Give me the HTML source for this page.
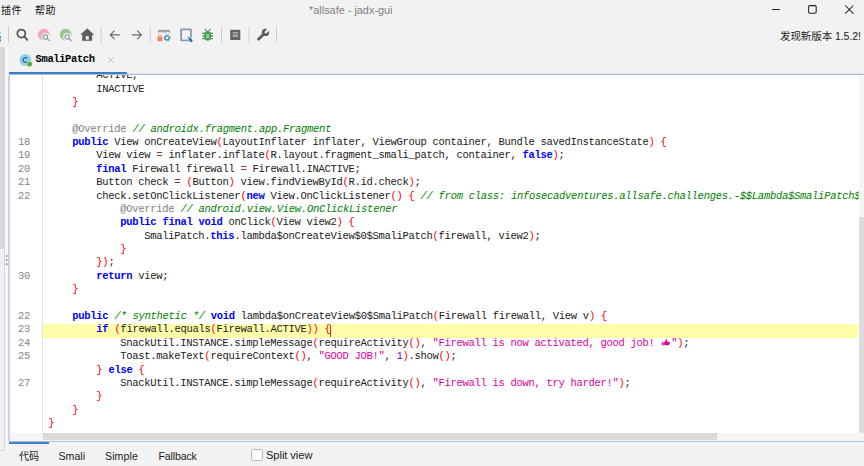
<!DOCTYPE html>
<html lang="zh-CN">
<head>
<meta charset="utf-8">
<title>*allsafe - jadx-gui</title>
<style>
html,body{margin:0;padding:0}
body{width:864px;height:466px;overflow:hidden;background:#f2f2f2;position:relative;font-family:"Liberation Sans","Noto Sans CJK SC",sans-serif;color:#1a1a1a}
.abs{position:absolute}
.ui{position:absolute;white-space:nowrap;font-size:11px;line-height:14px;color:#222}
.sep{position:absolute;top:27px;height:16px;width:1px;background:#cfcfcf}
#code{position:absolute;left:9px;top:75px;width:849.8px;height:366px;background:#fff;overflow:hidden}
#codeclip{position:absolute;left:0;top:0;width:864px;height:466px;clip-path:inset(75px 5.3px 33px 0)}
.ln{position:absolute;white-space:pre;font-family:"Liberation Mono",monospace;font-size:10.5px;letter-spacing:-0.3px;line-height:13.33px;height:13.33px;color:#202020}
.no{position:absolute;left:9px;width:21.1px;text-align:right;white-space:pre;font-family:"Liberation Mono",monospace;font-size:10.5px;letter-spacing:-0.3px;line-height:13.33px;height:13.33px;color:#8a8580}
.k{color:#0000ff;font-weight:bold}
.c{color:#008000;font-style:italic;letter-spacing:-0.277px}
.s{color:#dc009c}
.p{color:#ff0000}
.a{color:#808080}
.n{color:#6400c8}
.o{color:#804040}
.em{display:inline-block;width:10.8px;height:8px;position:relative;vertical-align:baseline;letter-spacing:0}
.em svg{position:absolute;left:0.6px;top:1px}
.em i{font-size:0;font-style:normal}
</style>
</head>
<body>
<!-- title bar / menu -->
<div class="ui" style="left:1px;top:3.5px;font-size:10px;letter-spacing:0.4px;color:#111">插件</div>
<div class="ui" style="left:35px;top:3.5px;font-size:10px;letter-spacing:0.4px;color:#111">帮助</div>
<div class="ui" id="title" style="left:309px;top:2.6px;font-size:10.9px;color:#808080">*allsafe - jadx-gui</div>
<svg class="abs" style="left:760px;top:0" width="104" height="20" viewBox="0 0 104 20" fill="none" stroke="#222" stroke-width="1.05">
<path d="M11.8 9.5h8"/>
<rect x="48.6" y="5.6" width="7.6" height="7.6" rx="1.3"/>
<path d="M85.2 5.5l8.2 8.2M93.4 5.5l-8.2 8.2"/>
</svg>
<div class="ui" id="newver" style="left:780px;top:29px;font-size:10.5px;color:#222;letter-spacing:-0.08px">发现新版本 1.5.2!</div>

<!-- toolbar -->
<svg class="abs" style="left:0;top:20px" width="290" height="28" viewBox="0 20 290 28">
<!-- clipped icon at left -->
<rect x="-1" y="31.8" width="2.1" height="1.7" fill="#b4c0cb"/><g fill="#1ea0dc"><rect x="-1" y="36" width="2.1" height="2.2"/><rect x="-1" y="39.2" width="2.1" height="2.2"/></g>
<!-- separators -->
<g fill="#cdcdcd">
<rect x="8" y="26.6" width="1" height="16.2"/>
<rect x="100.6" y="26.6" width="1" height="16.2"/>
<rect x="149.8" y="26.6" width="1" height="16.2"/>
<rect x="221" y="26.6" width="1" height="16.2"/>
<rect x="248.5" y="26.6" width="1" height="16.2"/>
<rect x="276" y="26.6" width="1" height="16.2"/>
</g>
<!-- search -->
<g fill="none" stroke="#555555" stroke-width="1.75" stroke-linecap="round"><circle cx="21.3" cy="33.5" r="4"/><path d="M24.4 36.7l2.9 3.1"/></g>
<!-- pink search -->
<circle cx="43.8" cy="34.7" r="5.9" fill="#f4a8b9"/>
<circle cx="45.4" cy="37" r="4" fill="#f2f2f2"/>
<g fill="none" stroke="#8293a3" stroke-width="1.05" stroke-linecap="round"><circle cx="45.3" cy="36.9" r="2.25"/><path d="M47.1 38.7l2.5 2"/></g>
<!-- green search -->
<circle cx="65.6" cy="34.7" r="5.9" fill="#93cc8a"/>
<circle cx="67.2" cy="37" r="4" fill="#f2f2f2"/>
<g fill="none" stroke="#8293a3" stroke-width="1.05" stroke-linecap="round"><circle cx="67.1" cy="36.9" r="2.25"/><path d="M68.9 38.7l2.5 2"/></g>
<!-- home -->
<path fill="#5c5c5c" stroke="#5c5c5c" stroke-width="0.6" stroke-linejoin="round" d="M87.2 28.7l6.4 5.9h-1.7v6h-9.4v-6h-1.7z"/>
<rect x="85.7" y="36.2" width="3.1" height="3.4" fill="#f2f2f2"/>
<!-- arrows -->
<g fill="none" stroke="#6a6a6a" stroke-width="1.2" stroke-linecap="round" stroke-linejoin="round">
<path d="M119.4 34.8h-9.2M114.2 30.8l-4 4 4 4"/>
<path d="M132.2 34.8h9.2M137.4 30.8l4 4-4 4"/>
</g>
<!-- deobf -->
<g>
<rect x="158.1" y="29.9" width="11.9" height="1.9" fill="#8e9ba8"/>
<rect x="158.1" y="31.5" width="0.9" height="1.9" fill="#98a4b0"/><rect x="169.1" y="31.5" width="0.9" height="1.9" fill="#98a4b0"/>
<rect x="160.5" y="32.2" width="6.5" height="0.8" fill="#c5ccd3"/>
<rect x="157.5" y="36.7" width="4.9" height="4.5" rx="0.5" fill="#f0875a"/>
<path d="M158.7 37v-0.9a1.25 1.25 0 0 1 2.5 0v0.9" fill="none" stroke="#f0875a" stroke-width="0.9"/>
<circle cx="167.1" cy="37.9" r="2.05" fill="none" stroke="#4a90bd" stroke-width="1.4"/>
<circle cx="167.1" cy="37.9" r="3.1" fill="none" stroke="#4a90bd" stroke-width="1" stroke-dasharray="1.22 1.215"/>
</g>
<!-- select rect + cursor -->
<rect x="181.1" y="29.3" width="9.8" height="11.1" rx="0.4" fill="none" stroke="#8999a9" stroke-width="1.8"/>
<path d="M187.5 36.3L192.3 39.4A1.6 1.6 0 1 1 189.6 41.3Z" fill="#1674a8" stroke="#f2f2f2" stroke-width="1.3" stroke-linejoin="round" paint-order="stroke"/>
<!-- bug -->
<g fill="#4c9c56">
<ellipse cx="207.7" cy="36" rx="3.5" ry="4.8"/>
<rect x="202.4" y="32.5" width="10.6" height="1.5" rx="0.5"/><rect x="202.4" y="35.1" width="10.6" height="1.5" rx="0.5"/><rect x="202.4" y="37.8" width="10.6" height="1.5" rx="0.5"/>
</g>
<path d="M205.2 29.3l2.3 2.8M210.2 29.3l-2.3 2.8" stroke="#4c9c56" stroke-width="1.25" stroke-linecap="round" fill="none"/>
<rect x="206.2" y="34.5" width="3" height="1.1" fill="#e9f1ea"/><rect x="206.2" y="36.8" width="3" height="1.1" fill="#e9f1ea"/>
<!-- log -->
<rect x="230.2" y="29.8" width="10.1" height="10.2" fill="#636363"/>
<g fill="#bdbdbd"><rect x="232.7" y="32.2" width="5.4" height="0.8"/><rect x="232.7" y="33.55" width="5.4" height="0.8"/><rect x="232.7" y="34.9" width="5.4" height="0.8"/><rect x="232.7" y="36.25" width="5.4" height="0.8"/></g>
<!-- wrench -->
<g>
<path d="M258.5 39.2l5.8-5.7" stroke="#5c5c5c" stroke-width="2.7" stroke-linecap="round" fill="none"/>
<circle cx="265.5" cy="32.4" r="3.65" fill="#5c5c5c"/>
<path d="M265.9 32.1l3.6-3.6" stroke="#f2f2f2" stroke-width="2.5" stroke-linecap="round" fill="none"/>
</g>
</svg>

<!-- left collapsed panel scrollbar -->
<div class="abs" style="left:0;top:47px;width:4.5px;height:403.5px;background:#f0f0f0;border-right:1px solid #d6d6d6;border-bottom:1px solid #d6d6d6;box-sizing:border-box"></div>
<div class="abs" style="left:0;top:47px;width:4.2px;height:201.6px;background:#d9d9d9"></div>
<!-- divider grip -->
<div class="abs" style="left:4.9px;top:47px;width:3.2px;height:403px;background:#f7f7f7"></div>
<svg class="abs" style="left:4px;top:252px" width="6" height="16" viewBox="4 252 6 16"><g fill="#939393"><circle cx="6.6" cy="256" r="1"/><circle cx="6.6" cy="260.1" r="1"/><circle cx="6.6" cy="264.2" r="1"/></g></svg>

<!-- tab -->
<svg class="abs" style="left:17px;top:50px" width="20" height="20" viewBox="17 50 20 20">
<circle cx="25.35" cy="60" r="5.95" fill="#86d2f4"/>
<path d="M27.3 58.5a2.35 2.35 0 1 0 0 2.9" fill="none" stroke="#476273" stroke-width="1.3"/>
<circle cx="29.5" cy="64.1" r="3.1" fill="#f2f2f2"/>
<circle cx="29.5" cy="64.1" r="2.5" fill="#4fb035"/>
</svg>
<div class="abs" id="tabname" style="left:35.6px;top:52px;font-family:'Liberation Mono',monospace;font-weight:bold;font-size:10.5px;letter-spacing:-0.4px;line-height:14px;color:#000;white-space:pre">SmaliPatch</div>
<svg class="abs" style="left:106px;top:55px" width="10" height="10" viewBox="0 0 10 10"><path d="M2 2.2l5.8 5.8M7.8 2.2l-5.8 5.8" stroke="#b9bfc5" stroke-width="0.95" fill="none"/></svg>
<div class="abs" style="left:9px;top:72.7px;width:855px;height:1px;background:#e0e4e8"></div>
<div class="abs" style="left:9px;top:73.6px;width:855px;height:1.4px;background:#a9bfd5"></div>
<div class="abs" style="left:9px;top:71.5px;width:118px;height:2.8px;background:#3c7fc6"></div>

<!-- code area -->
<div id="code">
  <div class="abs" style="left:32.8px;top:0;width:1.1px;height:358px;background:#e2e2e2"></div>
  <!-- current line highlight -->
  <div class="abs" style="left:33.9px;top:249px;width:815.1px;height:13.5px;background:#ffffaa"></div>
  <!-- h scrollbar -->
  <div class="abs" style="left:1px;top:358px;width:849px;height:8px;background:#f5f5f5"></div>
  <div class="abs" style="left:34px;top:357.9px;width:674px;height:7.4px;background:#dadada"></div>
  <!-- v scrollbar -->
</div>
<div class="abs" style="left:858.5px;top:75px;width:5.5px;height:366px;background:#f5f5f5"></div>
<div class="abs" style="left:858.8px;top:217px;width:5.2px;height:215.7px;background:#dcdcdc"></div>
<div class="abs" style="left:8.1px;top:75px;width:1.9px;height:366px;background:#c3d6e8"></div>
<div id="codeclip">
<div class="no" style="top:136.1px">18</div>
<div class="no" style="top:149.48px">19</div>
<div class="no" style="top:162.85px">20</div>
<div class="no" style="top:176.23px">21</div>
<div class="no" style="top:189.61px">22</div>
<div class="no" style="top:269.87px">30</div>
<div class="no" style="top:310px">22</div>
<div class="no" style="top:323.38px">23</div>
<div class="no" style="top:336.75px">24</div>
<div class="no" style="top:350.13px">25</div>
<div class="no" style="top:376.89px">27</div>
<div class="ln" style="top:69.21px;left:96.35px">ACTIVE,</div>
<div class="ln" style="top:82.59px;left:96.35px">INACTIVE</div>
<div class="ln" style="top:95.97px;left:72.35px"><span class="p">}</span></div>
<div class="ln" style="top:122.72px;left:72.35px"><span class="a">@Override</span> <span class="c">// androidx.fragment.app.Fragment</span></div>
<div class="ln" style="top:136.1px;left:72.35px"><span class="k">public</span> View onCreateView<span class="p">(</span>LayoutInflater inflater, ViewGroup container, Bundle savedInstanceState<span class="p">)</span> <span class="p">{</span></div>
<div class="ln" style="top:149.48px;left:96.35px">View view <span class="o">=</span> inflater.inflate<span class="p">(</span>R.layout.fragment_smali_patch, container, <span class="k">false</span><span class="p">)</span>;</div>
<div class="ln" style="top:162.85px;left:96.35px"><span class="k">final</span> Firewall firewall <span class="o">=</span> Firewall.INACTIVE;</div>
<div class="ln" style="top:176.23px;left:96.35px">Button check <span class="o">=</span> <span class="p">(</span>Button<span class="p">)</span> view.findViewById<span class="p">(</span>R.id.check<span class="p">)</span>;</div>
<div class="ln" style="top:189.61px;left:96.35px">check.setOnClickListener<span class="p">(</span><span class="k">new</span> View.OnClickListener<span class="p">(</span><span class="p">)</span> <span class="p">{</span> <span class="c">// from class: infosecadventures.allsafe.challenges.-$$Lambda$SmaliPatch$ExternalSyntheticLambda0</span></div>
<div class="ln" style="top:202.99px;left:120.35px"><span class="a">@Override</span> <span class="c">// android.view.View.OnClickListener</span></div>
<div class="ln" style="top:216.36px;left:120.35px"><span class="k">public</span> <span class="k">final</span> <span class="k">void</span> onClick<span class="p">(</span>View view2<span class="p">)</span> <span class="p">{</span></div>
<div class="ln" style="top:229.74px;left:144.35px">SmaliPatch.<span class="k">this</span>.lambda$onCreateView$0$SmaliPatch<span class="p">(</span>firewall, view2<span class="p">)</span>;</div>
<div class="ln" style="top:243.12px;left:120.35px"><span class="p">}</span></div>
<div class="ln" style="top:256.49px;left:96.35px"><span class="p">}</span><span class="p">)</span>;</div>
<div class="ln" style="top:269.87px;left:96.35px"><span class="k">return</span> view;</div>
<div class="ln" style="top:283.25px;left:72.35px"><span class="p">}</span></div>
<div class="ln" style="top:310px;left:72.35px"><span class="k">public</span> <span class="c">/* synthetic */</span> <span class="k">void</span> lambda$onCreateView$0$SmaliPatch<span class="p">(</span>Firewall firewall, View v<span class="p">)</span> <span class="p">{</span></div>
<div class="ln" style="top:323.38px;left:96.35px"><span class="k">if</span> <span class="p">(</span>firewall.equals<span class="p">(</span>Firewall.ACTIVE<span class="p">)</span><span class="p">)</span> <span class="p">{</span></div>
<div class="ln" style="top:336.75px;left:120.35px">SnackUtil.INSTANCE.simpleMessage<span class="p">(</span>requireActivity<span class="p">(</span><span class="p">)</span>, <span class="s">"Firewall is now activated, good job! <span class="em"><svg viewBox="0 0 12 12" width="10" height="8" preserveAspectRatio="none"><path fill="#dc009c" d="M1 6.2h2.2v4.6H1zM3.8 6.3c1.2-.9 1.9-2.2 2-3.9.05-.8 1.5-.7 1.7.5.15.9-.1 1.9-.4 2.7h2.6c1 0 1.3 1.2.6 1.6.5.4.4 1.2-.2 1.5.3.5.1 1.1-.4 1.3.2.5-.2 1-.8 1H5.4c-.6 0-1.1-.3-1.6-.6z"/></svg><i>👍</i></span>"</span><span class="p">)</span>;</div>
<div class="ln" style="top:350.13px;left:120.35px">Toast.makeText<span class="p">(</span>requireContext<span class="p">(</span><span class="p">)</span>, <span class="s">"GOOD JOB!"</span>, <span class="n">1</span><span class="p">)</span>.show<span class="p">(</span><span class="p">)</span>;</div>
<div class="ln" style="top:363.51px;left:96.35px"><span class="p">}</span> <span class="k">else</span> <span class="p">{</span></div>
<div class="ln" style="top:376.89px;left:120.35px">SnackUtil.INSTANCE.simpleMessage<span class="p">(</span>requireActivity<span class="p">(</span><span class="p">)</span>, <span class="s">"Firewall is down, try harder!"</span><span class="p">)</span>;</div>
<div class="ln" style="top:390.26px;left:96.35px"><span class="p">}</span></div>
<div class="ln" style="top:403.64px;left:72.35px"><span class="p">}</span></div>
<div class="ln" style="top:417.02px;left:48.35px"><span class="p">}</span></div>
<div class="abs" style="left:329.6px;top:325.2px;width:1px;height:11.8px;background:#ff2020"></div>
</div>

<!-- bottom border and tabs -->
<div class="abs" style="left:9px;top:441px;width:855px;height:1.3px;background:#a9c0d6"></div>
<div class="abs" style="left:9px;top:441.6px;width:39.7px;height:2.9px;background:#3c7fc6"></div>
<div class="ui" id="bt1" style="left:19px;top:450.2px;font-size:10.1px">代码</div>
<div class="ui" id="bt2" style="left:58.5px;top:449.1px;font-size:10.6px">Smali</div>
<div class="ui" id="bt3" style="left:105px;top:449.1px;font-size:10.6px;letter-spacing:0.1px">Simple</div>
<div class="ui" id="bt4" style="left:158.5px;top:449.1px;font-size:10.6px;letter-spacing:-0.16px">Fallback</div>
<div class="abs" style="left:251px;top:449.4px;width:11.5px;height:11.2px;box-sizing:border-box;border:1px solid #b4b4b4;border-radius:2.5px;background:#fff"></div>
<div class="ui" id="split" style="left:266px;top:448.1px;font-size:11.1px;letter-spacing:-0.05px">Split view</div>
</body>
</html>
